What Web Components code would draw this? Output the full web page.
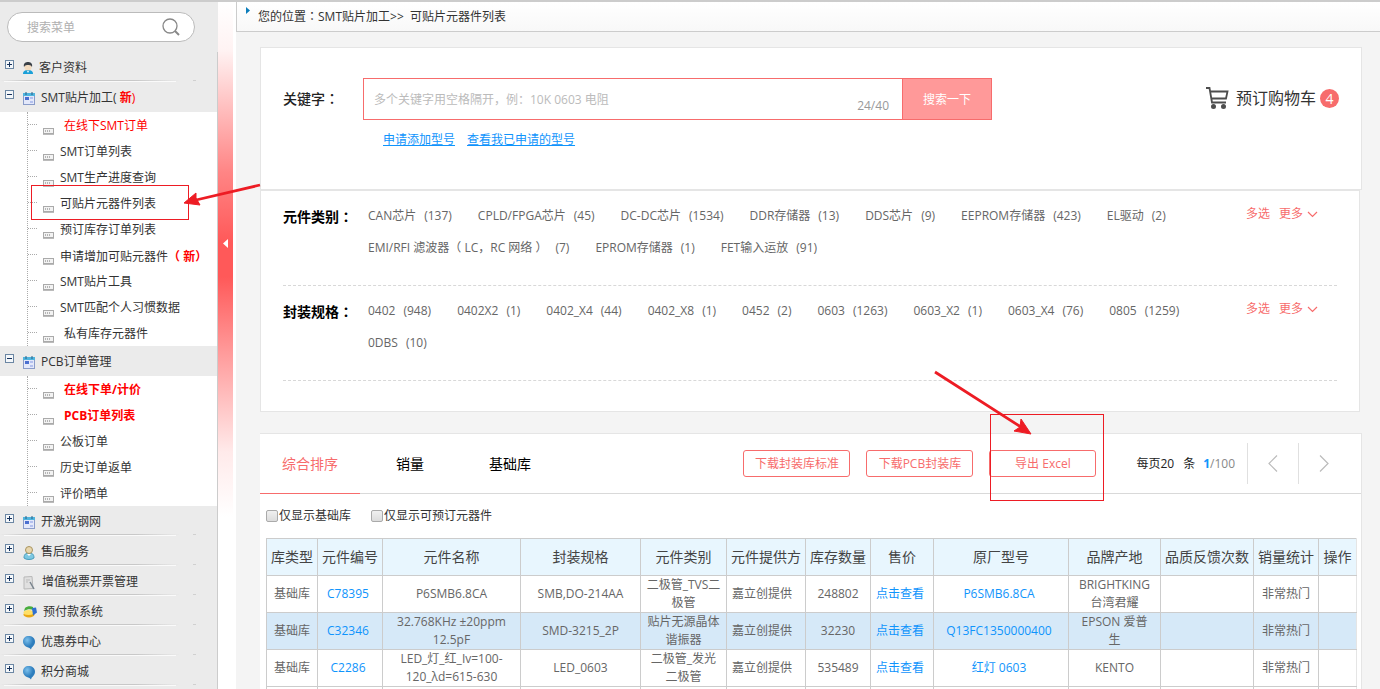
<!DOCTYPE html>
<html lang="zh-CN">
<head>
<meta charset="utf-8">
<title>可贴片元器件列表</title>
<style>
  html, body { margin: 0; height: 100%; }
  body {
    font-family: "Open Sans", "Noto Sans CJK SC", sans-serif;
    font-size: 12px; line-height: 18px; color: #333; background: #fff;
    overflow: hidden; text-spacing-trim: space-all;
    --red: #f76c6c; --blue: #0f94fc; --line: #e5e5e5; --grey: #666;
  }
</style>
</head>
<body>
<parts-app></parts-app>

<script>
const RESET = `:host,*,*::before,*::after{box-sizing:border-box}
  a{color:inherit;text-decoration:none} button,input{font:inherit;color:inherit;margin:0;text-spacing-trim:inherit}
  button{background:none;border:0;padding:0;cursor:pointer} svg{display:block;flex:none}
  .mark{font-family:"Noto Sans CJK TC",sans-serif}`;

function define(name, css, html) {
  const template = document.createElement('template');
  customElements.define(name, class extends HTMLElement {
    constructor() {
      super();
      const markup = typeof html === 'function' ? html(this) : html;
      template.innerHTML = `<style>${RESET}${css}</style>${markup}`;
      this.attachShadow({ mode: 'open' }).append(template.content.cloneNode(true));
    }
  });
}

/* Full-width punctuation centred in its cell. */
const mark = c => `<span class="mark" lang="zh-TW">${c}</span>`;
const COLON = mark('：');

const ICONS = {
  user: `<svg width="10" height="12" viewBox="0 0 10 12"><path d="M0 12c0-3 2-4 5-4s5 1 5 4z" fill="#1aa0d8"/><circle cx="5" cy="5" r="3.6" fill="#f3dcc0"/><path d="M1 5C0 1 3 0 5 0s5 1 4 5C8 3 6 3 5 3S2 3 1 5z" fill="#3a4148"/><path d="M4 9l1 2 1-2z" fill="#fff"/></svg>`,
  board: `<svg width="12" height="13" viewBox="0 0 12 13"><rect x=".5" y="1.500" width="11" height="11" fill="#e3e8fa" stroke="#8a9cc9"/><rect x="0" y="1" width="12" height="3" fill="#4fb4dd"/><path d="M3 0v3M9 0v3" stroke="#2b5f86"/><rect x="2" y="5" width="4" height="3" fill="#4a6ed0"/><rect x="7" y="9" width="3" height="2" fill="#b3c0ee"/><rect x="7" y="5" width="3" height="2" fill="#b3c0ee"/></svg>`,
  service: `<svg width="12" height="14" viewBox="0 0 12 14"><path d="M1 12c0-4 2-5 5-5s5 1 5 5c-2 2-8 2-10 0z" fill="#7cc8e2" stroke="#4a9cbb"/><circle cx="6" cy="4" r="3.500" fill="#e8d6ad" stroke="#a8945f"/><path d="M4 8l2 2 2-2z" fill="#fff"/></svg>`,
  invoice: `<svg width="13" height="14" viewBox="0 0 13 14"><path d="M1 1l8-.5 1 12-9 .5z" fill="#e0e0e0" stroke="#b8b8b8"/><path d="M3 4h4M3 6h2" stroke="#bbb"/><path d="M7 6l4 7" stroke="#78838d" stroke-width="1.500"/></svg>`,
  pay: `<svg width="14" height="12" viewBox="0 0 14 12"><ellipse cx="6" cy="8.500" rx="5.500" ry="3" fill="#eaa813"/><ellipse cx="5.500" cy="6.500" rx="5" ry="2.500" fill="#ffe067"/><path d="M2 2c2-2 6-2 8-1v3C8 3 4 3 1 5z" fill="#48ad3d"/><path d="M9 2l4-.5 1 5-4 3z" fill="#2e6fd0"/></svg>`,
  balloon: `<svg width="12" height="14" viewBox="0 0 12 14"><defs><radialGradient id="g" cx=".35" cy=".3"><stop offset="0" stop-color="#7cc0ec"/><stop offset="1" stop-color="#2d7dbd"/></radialGradient></defs><path d="M5.500 0C9 0 12 2 12 5.500S10 10 8.500 12L8 13.500 6.500 12C3 11 0 9 0 5.500S2.500 0 5.500 0z" fill="url(#g)"/></svg>`
};

define('menu-search', `
  :host{display:block;padding:10px 23px 10px 7px;background:#ebebeb}
  label{display:flex;align-items:center;height:30px;padding:0 14px 0 19px;background:#fff;border:1px solid #bbb;border-radius:15px}
  input{flex:1;min-width:0;border:0;outline:0;padding:2px 0 0;background:none}
  input::placeholder{color:#b0b0b0;opacity:1}`,
  `<label><input type="text" placeholder="搜索菜单" aria-label="搜索菜单">
   <svg width="18" height="18" viewBox="0 0 18 18" fill="none" stroke="#888" stroke-width="1.300"><circle cx="8" cy="8" r="7"/><path d="M13 13l4 4" stroke-width="2"/></svg></label>`);

define('menu-group', `
  :host{display:block}
  button{display:flex;width:100%;height:30px;background:#ebebeb;padding-left:5px;line-height:32px;text-align:left}
  .sign{margin-top:8px}
  .icon{display:block;margin:10px 6px 0 9px;flex:none}
  :host(:not([open])) button{background:
     linear-gradient(90deg,#d2d2d200,#c8c8c8 15%,#c8c8c8 75%,#c8c8c800) 0 28px/180px 1px no-repeat,
     linear-gradient(#fafafa,#fafafa) 4px 29px/172px 1px no-repeat,
     linear-gradient(#d0d0d0,#d0d0d0) 193px 28px/3px 1px no-repeat, #ebebeb}
  nav{margin-left:27px;border-left:1px dotted #aaa}
  :host(:not([open])) nav{display:none}`,
  el => `<button type="button" aria-expanded="${el.hasAttribute('open')}">
    <svg class="sign" width="9" height="9" viewBox="0 0 9 9"><rect x=".5" y=".5" width="8" height="8" fill="#f4f7fa" stroke="#6b86a3"/><path d="M2 4.500h5${el.hasAttribute('open') ? '' : 'M4.500 2v5'}" stroke="#16325c"/></svg>
    <span class="icon">${ICONS[el.getAttribute('icon')]}</span><span><slot name="title"></slot></span></button>
    <nav><slot></slot></nav>`);

define('menu-link', `
  :host{display:block}
  a{display:flex;height:26px;line-height:28px;white-space:nowrap}
  a::before{content:"";width:9px;height:13px;border-bottom:1px dotted #aaa}
  svg{margin:16px 6px 0}
  :host([hot]) a{color:#f00;} :host([hot]) svg, :host([inset]) svg{margin-right:10px}
  :host([strong]) a{font-weight:700}`,
  `<a href="#"><svg width="11" height="7" viewBox="0 0 11 7"><rect x=".5" y=".5" width="10" height="5" fill="#f3f3f3" stroke="#aaa"/><path d="M0 6.500h11" stroke="#bbb"/><path d="M2 3h1m1 0h1m1 0h1" stroke="#777"/></svg><span><slot></slot></span></a>`);

define('side-menu', `
  :host{display:flex;flex-direction:column;width:218px;flex:none}
  .tree{flex:1;display:flex;flex-direction:column;border-right:1px solid #ccc;background:#fff}
  .tree::after{content:"";flex:1;background:#ebebeb}
  .new{color:#f00}`,
  `<menu-search></menu-search>
  <div class="tree">
    <menu-group icon="user"><span slot="title">客户资料</span></menu-group>
    <menu-group icon="board" open><span slot="title">SMT贴片加工( <b class="new">新</b><span class="new">)</span></span>
      <menu-link hot>在线下SMT订单</menu-link>
      <menu-link>SMT订单列表</menu-link>
      <menu-link>SMT生产进度查询</menu-link>
      <menu-link>可贴片元器件列表</menu-link>
      <menu-link>预订库存订单列表</menu-link>
      <menu-link>申请增加可贴元器件<b class="new">${mark('（')}&nbsp;新${mark('）')}</b></menu-link>
      <menu-link>SMT贴片工具</menu-link>
      <menu-link>SMT匹配个人习惯数据</menu-link>
      <menu-link inset>私有库存元器件</menu-link>
    </menu-group>
    <menu-group icon="board" open><span slot="title">PCB订单管理</span>
      <menu-link hot strong>在线下单/计价</menu-link>
      <menu-link hot strong>PCB订单列表</menu-link>
      <menu-link>公板订单</menu-link>
      <menu-link>历史订单返单</menu-link>
      <menu-link>评价晒单</menu-link>
    </menu-group>
    <menu-group icon="board"><span slot="title">开激光钢网</span></menu-group>
    <menu-group icon="service"><span slot="title">售后服务</span></menu-group>
    <menu-group icon="invoice"><span slot="title">增值税票开票管理</span></menu-group>
    <menu-group icon="pay"><span slot="title">预付款系统</span></menu-group>
    <menu-group icon="balloon"><span slot="title">优惠券中心</span></menu-group>
    <menu-group icon="balloon"><span slot="title">积分商城</span></menu-group>
  </div>`);

define('split-bar', `
  :host{display:flex;flex:none;width:18px;padding-right:3px;background:#fff}
  button{display:flex;flex:1;justify-content:center;padding-top:237px;
    background:linear-gradient(#fff 0,#fff3f3 48px,#ff8585 170px,#ff5959 240px,#ff5959 275px,#ff9a9a 350px,#ffeaea 450px,#fff 515px)}`,
  `<button type="button" aria-label="收起菜单"><svg width="5" height="9" viewBox="0 0 5 9"><path d="M5 0v9L0 4.500z" fill="#fff"/></svg></button>`);

define('crumb-bar', `
  :host{display:flex;height:30px;flex:none;padding-left:9px;line-height:28px;
    border-left:1px solid #ccc;border-bottom:1px solid #ccc;background:linear-gradient(#fff,#f8f8f8)}
  svg{margin:5px 8px 0 0}`,
  `<svg width="4" height="7" viewBox="0 0 4 7"><path d="M0 0l4 3.500L0 7z" fill="#0b7dbb"/></svg><span>您的位置${COLON}SMT贴片加工&gt;&gt; &nbsp;可贴片元器件列表</span>`);

define('search-card', `
  :host{display:flex;align-items:flex-start;height:143px;padding:30px 22px 0;background:#fff;border:1px solid var(--line)}
  .name{width:80px;line-height:40px;font-size:14px;font-weight:500;color:#222}
  form{display:flex}
  .box{display:flex;width:539px;height:42px;border:1px solid var(--red);border-right:0;padding:0 13px 0 10px}
  input{flex:1;min-width:0;border:0;outline:0;padding:2px 0 0;background:none}
  input::placeholder{color:#bbb;opacity:1}
  .count{align-self:flex-end;color:#999;line-height:26px}
  .go{width:90px;padding-top:2px;background:#ff9999;border:1px solid var(--red);color:#fff}
  .links{display:flex;gap:12px;padding:11px 20px;color:var(--blue)}
  .links a{text-decoration:underline}
  .cart{display:flex;align-items:center;gap:4px;margin-left:auto;height:40px;font-size:16px}
  .cart svg{margin-right:3px}
  .badge{width:19px;height:19px;line-height:19px;border-radius:10px;background:var(--red);color:#fff;font-size:14px;text-align:center}`,
  `<label class="name" for="kw">关键字${COLON}</label>
  <div><form onsubmit="return false"><div class="box"><input id="kw" type="text" placeholder="多个关键字用空格隔开，例：10K 0603 电阻"><span class="count">24/40</span></div>
    <button class="go" type="submit">搜索一下</button></form>
    <div class="links"><a href="#">申请添加型号</a><a href="#">查看我已申请的型号</a></div></div>
  <a class="cart" href="#"><svg width="23" height="22" viewBox="0 0 23 22" fill="none" stroke="#4d4d4d" stroke-width="1.800"><path d="M0 1h3.500L6 15.500h14M4 4.500h17.500L20 11.500H5.500"/><circle cx="7.500" cy="19.500" r="1.600" fill="#4d4d4d"/><circle cx="17.500" cy="19.500" r="1.600" fill="#4d4d4d"/></svg><span>预订购物车</span><span class="badge">4</span></a>`);

define('filter-row', `
  :host{display:flex;height:95px;padding-top:9px;line-height:32px;border-bottom:1px dashed #d8d8d8;color:var(--grey)}
  .name{width:85px;flex:none;font-size:14px;font-weight:700;color:#000}
  ul{flex:1;display:flex;flex-wrap:wrap;align-content:flex-start;column-gap:26px;margin:0;padding:0;list-style:none}
  li a{display:flex;gap:8px;white-space:nowrap}
  .more{display:flex;flex:none;gap:9px;width:91px;height:28px;line-height:28px;color:var(--red)}
  .more button{display:flex;align-items:center;gap:4px}`,
  el => `<span class="name">${el.getAttribute('label')}${COLON}</span>
  <ul>${el.getAttribute('items').split('|').map(t => { const [n, c] = t.split('='); return `<li><a href="#"><span>${n}</span><span>(${c})</span></a></li>`; }).join('')}</ul>
  <div class="more"><button type="button">多选</button><button type="button">更多<svg width="11" height="7" viewBox="0 0 11 7" fill="none" stroke="#f76c6c" stroke-width="1.200"><path d="M1 1l4.500 4.500L10 1"/></svg></button></div>`);

define('filter-card', `
  :host{display:block;margin-right:2px;padding:0 22px 30px;background:#fff;border:1px solid var(--line)}`,
  `<filter-row label="元件类别" items="CAN芯片=137|CPLD/FPGA芯片=45|DC-DC芯片=1534|DDR存储器=13|DDS芯片=9|EEPROM存储器=423|EL驱动=2|EMI/RFI 滤波器（ LC，RC 网络 ）=7|EPROM存储器=1|FET输入运放=91"></filter-row>
   <filter-row label="封装规格" items="0402=948|0402X2=1|0402_X4=44|0402_X8=1|0452=2|0603=1263|0603_X2=1|0603_X4=76|0805=1259|0DBS=10"></filter-row>`);

define('tool-bar', `
  :host{display:flex;height:60px;border-bottom:1px solid #d9d9d9}
  .tab{width:100px;height:60px;font-size:14px;color:#000;border-bottom:1px solid transparent}
  .tab[aria-selected=true]{color:var(--red);border-color:var(--red)}
  .right{display:flex;align-items:center;margin-left:auto}
  .act{width:107px;height:27px;margin-right:16px;border:1px solid var(--red);border-radius:3px;color:var(--red);background:#fff}
  .size{margin:0 8px 0 24px;color:#222} .size span{margin-left:9px}
  .page{color:#888;margin-right:12px} .page b{color:var(--blue)}
  .step{display:flex;align-items:center;width:51px;height:41px;border-left:1px solid #e0e0e0;padding-left:20px}
  .step:last-child{width:63px}`,
  `<div role="tablist"><button class="tab" role="tab" aria-selected="true">综合排序</button><button class="tab" role="tab" aria-selected="false">销量</button><button class="tab" role="tab" aria-selected="false">基础库</button></div>
  <div class="right"><button class="act" type="button">下载封装库标准</button><button class="act" type="button">下载PCB封装库</button><button class="act" type="button">导出 Excel</button>
  <span class="size">每页20<span>条</span></span><span class="page"><b>1</b>/100</span>
  <button class="step" aria-label="上一页"><svg width="10" height="17" viewBox="0 0 10 17" fill="none" stroke="#bbb" stroke-width="1.200"><path d="M9 .5l-8 8 8 8"/></svg></button>
  <button class="step" aria-label="下一页"><svg width="10" height="17" viewBox="0 0 10 17" fill="none" stroke="#bbb" stroke-width="1.200"><path d="M1 .5l8 8-8 8"/></svg></button></div>`);

define('only-filters', `
  :host{display:flex;align-items:center;gap:20px;height:44px;padding-left:6px}
  label{display:flex;align-items:center;gap:1px}
  input{appearance:none;width:12px;height:12px;border:1px solid #aaa;border-radius:2px;background:linear-gradient(#f0f0f0,#dcdcdc)}`,
  `<label><input type="checkbox">仅显示基础库</label><label><input type="checkbox">仅显示可预订元器件</label>`);

const COLUMNS = [['库类型', 51], ['元件编号', 65], ['元件名称', 138], ['封装规格', 120], ['元件类别', 86], ['元件提供方', 79], ['库存数量', 65], ['售价', 63], ['原厂型号', 135], ['品牌产地', 92], ['品质反馈次数', 93], ['销量统计', 65], ['操作', 38]];
const PARTS = [
  ['C78395', 'P6SMB6.8CA', 'SMB,DO-214AA', '二极管_TVS二<br>极管', '248802', 'P6SMB6.8CA', 'BRIGHTKING<br>台湾君耀'],
  ['C32346', '32.768KHz ±20ppm<br>12.5pF', 'SMD-3215_2P', '贴片无源晶体<br>谐振器', '32230', 'Q13FC1350000400', 'EPSON 爱普<br>生'],
  ['C2286', 'LED_灯_红_Iv=100-<br>120_λd=615-630', 'LED_0603', '二极管_发光<br>二极管', '535489', '红灯 0603', 'KENTO']
];
const link = t => `<a href="#">${t}</a>`;
define('parts-table', `
  :host{display:block;padding:0 6px}
  table{width:100%;table-layout:fixed;border-collapse:collapse;text-align:center;color:var(--grey)}
  th,td{height:37px;padding:0;border:1px solid #ccc;white-space:nowrap}
  th:last-child,td:last-child{border-right-color:#e5e5e5}
  th{font-size:14px;font-weight:400;color:#444;background:#e8f6fe}
  td:nth-child(6){text-align:left;padding-left:5px}
  tbody tr:nth-child(2){background:#d6e9f8}
  a{color:var(--blue);margin-right:4px}`,
  `<table><colgroup>${COLUMNS.map(c => `<col style="width:${c[1]}px">`).join('')}</colgroup>
  <thead><tr>${COLUMNS.map(c => `<th scope="col">${c[0]}</th>`).join('')}</tr></thead>
  <tbody>${PARTS.map(p => `<tr>${['基础库', link(p[0]), p[1], p[2], p[3], '嘉立创提供', p[4], link('点击查看'), link(p[5]), p[6], '', '非常热门', ''].map(c => `<td>${c}</td>`).join('')}</tr>`).join('')}
  <tr>${'<td></td>'.repeat(COLUMNS.length)}</tr></tbody></table>`);

define('result-card', `
  :host{display:block;margin-top:21px;background:#fff;border:1px solid var(--line);border-left:0}`,
  `<tool-bar></tool-bar><only-filters></only-filters><parts-table></parts-table>`);

/* Red call-outs drawn over the page: one box and arrow per highlighted control. */
define('callout-layer', `
  :host{position:absolute;inset:-2px 0 0;pointer-events:none;overflow:hidden}
  svg{width:100%;height:100%}`,
  `<svg fill="none" stroke="#ed1c24"><rect x="31.500" y="185.500" width="157" height="34"/><rect x="990.500" y="414.500" width="113" height="86"/>
   <path d="M260 185L196 200M935 372l86 55" stroke-width="2.800"/>
   <path d="M184 203l12-10 0 5 4 7zM1031 434l-17-3 6-4 1-8z" fill="#ed1c24" stroke-width="1"/></svg>`);

define('parts-app', `
  :host{display:flex;position:relative;height:100vh;border-top:2px solid #ccc}
  main{flex:1;min-width:0;display:flex;flex-direction:column;overflow:hidden;background:#f4f4f4}
  .cards{padding:15px 18px 0 24px}`,
  `<side-menu></side-menu><split-bar></split-bar>
  <main><crumb-bar></crumb-bar>
  <div class="cards"><search-card></search-card><filter-card></filter-card><result-card></result-card></div></main>
  <callout-layer></callout-layer>`);
</script>
</body>
</html>
